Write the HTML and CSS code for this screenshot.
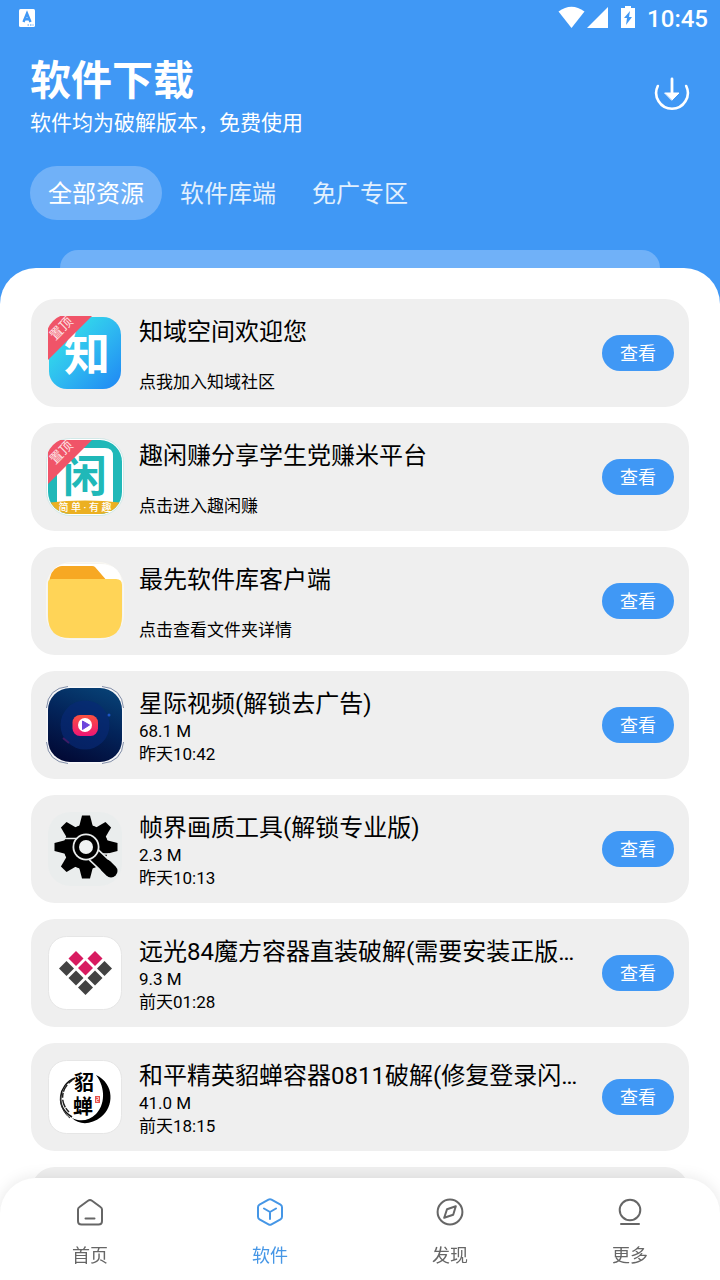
FILE: index.html
```html
<!DOCTYPE html>
<html lang="zh-CN">
<head>
<meta charset="utf-8">
<meta name="viewport" content="width=device-width, initial-scale=1">
<title>软件下载</title>
<link rel="stylesheet" href="styles.css">
</head>
<body>
<div class="status">
  <svg class="status-app" width="16" height="18" viewBox="0 0 16 18" aria-hidden="true"><rect width="16" height="18" rx="1.5" fill="#fff"/><path d="M4.500 13 8 4.500 11.500 13M5.600 10.300h4.800" fill="none" stroke="#4098f5" stroke-width="2.400"/><path d="M8.500 16h6" stroke="#4098f5" stroke-width="1.200" stroke-dasharray="1.500 1"/></svg>
  <div class="status-right">
    <svg width="90" height="24" viewBox="0 0 90 24" aria-hidden="true" class="status-icons"><path d="M1.500 6.500Q14.500-3 27.500 6.500L14.500 23Z" transform="translate(0 1)" fill="#fff"/><path d="M30 24 51 3v21Z" fill="#fff"/><path d="M64 4h4V2h6v2h4v20H64Z" fill="#fff"/><path d="m73 7-6 7h3l-1 7 6-8h-3Z" fill="#4098f5"/></svg>
    <time class="clock">10:45</time>
  </div>
</div>
<header class="header">
  <div class="heading">
    <div>
      <h1 class="title">软件下载</h1>
      <p class="subtitle">软件均为破解版本，免费使用</p>
    </div>
    <button class="download" aria-label="下载管理"><svg width="36" height="36" viewBox="0 0 36 36" fill="none" stroke="#fff" stroke-linecap="round"><path d="M3.800 10A15.800 15.800 0 1 0 32.200 10" stroke-width="2.600"/><path d="M18 3v16" stroke-width="2.800"/><path d="M11 17h14l-7 7Z" fill="#fff" stroke-width="1" stroke-linejoin="round"/></svg></button>
  </div>
  <nav class="tabs" aria-label="分类">
    <button class="tab tab-active">全部资源</button>
    <button class="tab">软件库端</button>
    <button class="tab">免广专区</button>
  </nav>
  <div class="peek"></div>
</header>
<main class="sheet">
<ul class="list">
  <li class="card">
    <svg class="icon" viewBox="0 0 78 78" aria-hidden="true">
      <defs>
        <linearGradient id="aqua" x1="0" y1="0" x2="1" y2="1"><stop offset="0" stop-color="#35f0e6"/><stop offset=".5" stop-color="#2fbcf0"/><stop offset="1" stop-color="#1f86f4"/></linearGradient>
        <clipPath id="round"><rect width="78" height="78" rx="24"/></clipPath>
      </defs>
      <rect x="3" y="3" width="72" height="72" rx="18" fill="url(#aqua)"/>
      <text x="41" y="56" text-anchor="middle" class="logo-zhi">知</text>
      <path d="M2 2h44L2 46Z" fill="#f05468" clip-path="url(#round)"/>
      <text x="0" y="5" transform="translate(15 14) rotate(-45)" text-anchor="middle" class="ribbon">置顶</text>
    </svg>
    <div class="info"><h2 class="name">知域空间欢迎您</h2><p class="meta">点我加入知域社区</p></div>
    <button class="view">查看</button>
  </li>
  <li class="card">
    <svg class="icon" viewBox="0 0 78 78" aria-hidden="true">
      <defs><clipPath id="body2"><rect x="2" y="2" width="74" height="74" rx="22"/></clipPath></defs>
      <rect x=".5" y=".5" width="77" height="77" rx="24" fill="#fff" stroke="#b9dfde" stroke-width=".6"/>
      <g clip-path="url(#body2)">
        <rect width="78" height="78" fill="#20b8b8"/>
        <path d="M11 64V18q0-8 8-8h40q8 0 8 8v46Z" fill="#fff"/>
        <path d="M0 65q39-5 78 0v13H0Z" fill="#ebb022"/>
      </g>
      <text x="39" y="54" text-anchor="middle" class="logo-xian">闲</text>
      <text x="39" y="73" text-anchor="middle" class="logo-caption">简 单 · 有 趣</text>
      <path d="M2 2h44L2 46Z" fill="#f05468" clip-path="url(#round)"/>
      <text x="0" y="5" transform="translate(15 14) rotate(-45)" text-anchor="middle" class="ribbon">置顶</text>
    </svg>
    <div class="info"><h2 class="name">趣闲赚分享学生党赚米平台</h2><p class="meta">点击进入趣闲赚</p></div>
    <button class="view">查看</button>
  </li>
  <li class="card">
    <svg class="icon" viewBox="0 0 78 78" aria-hidden="true">
      <rect x=".5" y=".5" width="77" height="77" rx="25" fill="#f4f3ef" stroke="#faf8f2"/>
      <path d="M18 2h36q22 0 22 22H2Q4 4 18 2Z" fill="#fff"/>
      <path d="M3 22Q4 8 12 5q2-1 4-1h30q2 0 3 1l13 15Z" fill="#f7a823"/>
      <path d="M2 21q0-4 4-4h64q6 0 6 6v31q0 22-22 22H24Q2 76 2 54Z" fill="#ffd457"/>
    </svg>
    <div class="info"><h2 class="name">最先软件库客户端</h2><p class="meta">点击查看文件夹详情</p></div>
    <button class="view">查看</button>
  </li>
  <li class="card">
    <svg class="icon" viewBox="0 0 78 78" aria-hidden="true">
      <defs>
        <linearGradient id="night" x1=".7" y1="0" x2=".3" y2="1"><stop offset="0" stop-color="#073f73"/><stop offset=".45" stop-color="#03245a"/><stop offset="1" stop-color="#020a36"/></linearGradient>
        <linearGradient id="hot" x1="0" y1="0" x2="0" y2="1"><stop offset="0" stop-color="#fc513e"/><stop offset="1" stop-color="#ee1675"/></linearGradient>
      </defs>
      <rect x=".5" y=".5" width="77" height="77" rx="24" fill="#f8f8fa"/>
      <path d="M.5 22Q2 2 22 .5M56 .5Q76 2 77.500 22M.5 56Q2 76 22 77.500M56 77.500Q76 76 77.500 56" fill="none" stroke="#53648a" stroke-width=".7"/>
      <rect x="2" y="2" width="74" height="74" rx="22" fill="url(#night)"/>
      <circle cx="39" cy="39" r="24.500" fill="#082a76" opacity=".65"/>
      <circle cx="63" cy="29" r="1.500" fill="#1c54c4"/><path d="m17 52 6 5" stroke="#3d1c66" stroke-width="2"/>
      <rect x="26.500" y="29" width="25.500" height="21" rx="7.500" fill="url(#hot)"/>
      <circle cx="39" cy="39" r="7" fill="#fff"/><path d="m36.500 35 7 4-7 4.500Z" fill="#6a45dc" stroke="#6a45dc" stroke-linejoin="round"/>
    </svg>
    <div class="info"><h2 class="name">星际视频(解锁去广告)</h2><p class="meta">68.1 M</p><p class="meta">昨天10:42</p></div>
    <button class="view">查看</button>
  </li>
  <li class="card">
    <svg class="icon" viewBox="0 0 78 78" aria-hidden="true">
      <defs><path id="tooth" d="M-7-20-4-31.500h8L7-20Z"/></defs>
      <rect x="2" y="2" width="74" height="74" rx="22" fill="#eaeded"/>
      <g transform="translate(40 37)">
        <circle r="22.500"/>
        <use href="#tooth"/><use href="#tooth" transform="rotate(45)"/><use href="#tooth" transform="rotate(90)"/><use href="#tooth" transform="rotate(180)"/><use href="#tooth" transform="rotate(225)"/><use href="#tooth" transform="rotate(270)"/><use href="#tooth" transform="rotate(315)"/>
        <path d="M-22-8.500h12M10 7h13" stroke="#eaeded" stroke-width="1.600"/>
        <path d="m8 8 17 16" stroke="#eaeded" stroke-width="15"/>
        <path d="m8 8 17 16" stroke="#000" stroke-width="12"/>
        <path d="m20 19 5 5" stroke="#000" stroke-width="13" stroke-linecap="round"/>
        <circle r="13.500" fill="#eaeded"/><circle r="11.700"/><circle r="7" fill="#f0f3f3"/>
      </g>
    </svg>
    <div class="info"><h2 class="name">帧界画质工具(解锁专业版)</h2><p class="meta">2.3 M</p><p class="meta">昨天10:13</p></div>
    <button class="view">查看</button>
  </li>
  <li class="card">
    <svg class="icon" viewBox="0 0 78 78" aria-hidden="true">
      <defs><path id="gem" d="M0-7.500 7.500 0 0 7.500-7.500 0Z"/></defs>
      <rect x="2.500" y="2.500" width="73" height="73" rx="18" fill="#fff" stroke="#e6e6e6"/>
      <g fill="#d81b60"><use href="#gem" x="30" y="24.500"/><use href="#gem" x="49" y="24.500"/><use href="#gem" x="39.500" y="34"/></g>
      <g fill="#424242"><use href="#gem" x="20.500" y="34.500"/><use href="#gem" x="58.500" y="34.500"/><use href="#gem" x="30" y="44"/><use href="#gem" x="49" y="44"/><use href="#gem" x="39.500" y="53.500"/></g>
    </svg>
    <div class="info"><h2 class="name">远光84魔方容器直装破解(需要安装正版…</h2><p class="meta">9.3 M</p><p class="meta">前天01:28</p></div>
    <button class="view">查看</button>
  </li>
  <li class="card">
    <svg class="icon" viewBox="0 0 78 78" aria-hidden="true">
      <rect x="2.500" y="2.500" width="73" height="73" rx="18" fill="#fff" stroke="#e6e6e6"/>
      <path d="M50 17c19 9 18 32 5 42-10 8-22 8-29 1 8 4 17 3 24-4 9-9 10-26 0-39Z"/>
      <path d="M26 59C9 49 12 27 29 20" fill="none" stroke="#111" stroke-width="1.600"/>
      <path d="M23 54C12 43 16 28 28 21" fill="none" stroke="#222" stroke-width="1.500" stroke-dasharray="5 1 8 2"/>
      <path d="M24 60C18 56 13 46 15 37" fill="none" stroke="#333"/>
      <text x="38" y="32" text-anchor="middle" class="logo-ink">貂</text>
      <text x="37" y="56" text-anchor="middle" class="logo-ink">蝉</text>
      <rect x="49" y="38" width="5" height="7" fill="#e8534d"/><path d="M50.500 39.500h2v2h-2v2h2" fill="none" stroke="#fff" stroke-width=".7"/>
    </svg>
    <div class="info"><h2 class="name">和平精英貂蝉容器0811破解(修复登录闪…</h2><p class="meta">41.0 M</p><p class="meta">前天18:15</p></div>
    <button class="view">查看</button>
  </li>
  <li class="card"></li>
</ul>
</main>
<nav class="bottom" aria-label="主导航">
  <a class="item" href="#home"><svg class="item-icon" viewBox="0 0 28 28"><path d="M2 11.500Q2 10 3.500 9L12 2.700q2-1.400 4 0L24.500 9Q26 10 26 11.500V23q0 3.500-3.500 3.500h-17Q2 26.500 2 23ZM9.500 20.500h9"/></svg>首页</a>
  <a class="item item-active" href="#apps"><svg class="item-icon" viewBox="0 0 28 28"><path d="M12.500 1.700q1.500-.8 3 0l9 5q1.500.8 1.500 2.500v9.600q0 1.700-1.500 2.500l-9 5q-1.500.8-3 0l-9-5Q2 20.500 2 18.800V9.200q0-1.700 1.500-2.500ZM8 10.500l6 3.500 6-3.500M14 14v7"/></svg>软件</a>
  <a class="item" href="#discover"><svg class="item-icon" viewBox="0 0 28 28"><circle cx="14" cy="14" r="12.400"/><path d="m19.800 8.200-2.600 8.500-9 3.100 2.800-8.500Z"/></svg>发现</a>
  <a class="item" href="#more"><svg class="item-icon" viewBox="0 0 28 28"><circle cx="14" cy="12" r="10.300"/><path d="M5 26h18"/></svg>更多</a>
</nav>
</body>
</html>
```

FILE: styles.css
```css
* {
  box-sizing: border-box;
}

body {
  margin: 0;
  height: 100vh;
  overflow: hidden;
  display: flex;
  flex-direction: column;
  background: #4098f5;
  color: #000;
  font-family: Roboto, "Noto Sans CJK SC", sans-serif;
}

h1, h2, p, ul {
  margin: 0;
  padding: 0;
}

button {
  border: 0;
  padding: 0;
  background: none;
  color: inherit;
  font: inherit;
  cursor: pointer;
}

.status {
  flex: none;
  height: 36px;
  padding: 0 12px 0 19px;
  display: flex;
  align-items: center;
  justify-content: space-between;
  color: #fff;
}

.status-right {
  display: flex;
  align-items: center;
}

.status-icons {
  display: block;
  margin-bottom: 4px;
}

.clock {
  font-size: 24px;
  line-height: 36px;
  padding-top: 2px;
  font-weight: 500;
}

.header {
  flex: none;
  padding: 16px 30px 0;
  color: #fff;
}

.heading {
  display: flex;
  align-items: flex-start;
  justify-content: space-between;
}

.title {
  font-size: 41px;
  line-height: 58px;
  font-weight: 700;
}

.subtitle {
  font-size: 21px;
  line-height: 26px;
}

.download {
  margin-top: 24px;
  width: 36px;
  height: 36px;
}

.download svg {
  display: block;
}

.tabs {
  margin-top: 30px;
  display: flex;
}

.tab {
  height: 54px;
  padding: 0 18px 4px;
  border-radius: 27px;
  font-size: 24px;
  color: #e2f0fe;
}

.tab-active {
  background: #70b1f8;
  color: #fff;
}

.peek {
  height: 18px;
  margin: 30px 30px 0;
  border-radius: 18px 18px 0 0;
  background: #70b1f8;
}

.sheet {
  flex: 1;
  min-height: 0;
  overflow: hidden;
  padding: 31px 31px 0;
  border-radius: 36px 36px 0 0;
  background: #fff;
}

.list {
  list-style: none;
  display: grid;
  gap: 16px;
}

.card {
  min-height: 108px;
  padding: 13px 15px;
  display: flex;
  align-items: center;
  gap: 15px;
  border-radius: 24px;
  background: #efefef;
}

.icon {
  flex: none;
  width: 78px;
  height: 78px;
}

.info {
  flex: 1;
  min-width: 0;
  min-height: 82px;
  padding-top: 4px;
  display: flex;
  flex-direction: column;
}

.name {
  margin-bottom: auto;
  font-size: 24px;
  line-height: 32px;
  font-weight: 400;
  white-space: nowrap;
}

.meta {
  font-size: 17px;
  line-height: 23px;
}

.view {
  flex: none;
  width: 72px;
  height: 36px;
  padding-bottom: 2px;
  border-radius: 18px;
  background: #4098f5;
  color: #fff;
  font-size: 18px;
}

.bottom {
  position: fixed;
  inset: auto 0 0;
  height: 102px;
  padding-top: 20px;
  display: grid;
  grid-template-columns: repeat(4, 1fr);
  border-radius: 36px 36px 0 0;
  background: #fff;
  box-shadow: 0 0 16px rgba(0, 0, 0, 0.1);
}

.item {
  display: flex;
  flex-direction: column;
  align-items: center;
  gap: 17px;
  color: #666;
  font-size: 18px;
  line-height: 26px;
  text-decoration: none;
}

.item-active {
  color: #4596e6;
}

.item-icon {
  width: 28px;
  height: 28px;
  fill: none;
  stroke: currentColor;
  stroke-width: 2;
  stroke-linecap: round;
  stroke-linejoin: round;
}

.logo-zhi {
  font-size: 46px;
  font-weight: 700;
  fill: #fff;
}

.logo-xian {
  font-size: 44px;
  font-weight: 700;
  fill: #20b8b8;
}

.logo-caption {
  font-size: 10px;
  font-weight: 500;
  fill: #fff;
}

.logo-ink {
  font-size: 20px;
  font-weight: 700;
}

.ribbon {
  font-size: 13px;
  fill: #fde3e6;
}
```
